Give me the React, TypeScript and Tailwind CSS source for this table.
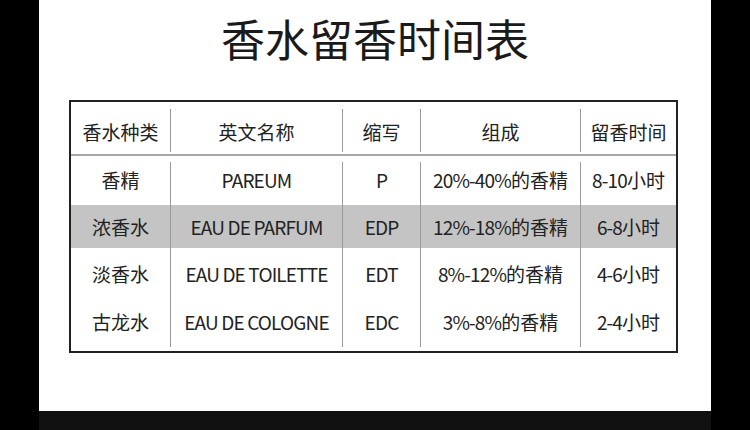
import React from "react";

const font = { fontFamily: '"Noto Sans CJK SC", "Noto Sans", sans-serif' };

const widths = ["w-[99px]", "w-[172px]", "w-[78px]", "w-[160px]", "flex-1"];

const header = ["香水种类", "英文名称", "缩写", "组成", "留香时间"];

const rows: { cells: string[]; gray?: boolean; cls: string }[] = [
  { cells: ["香精", "PAREUM", "P", "20%-40%的香精", "8-10小时"], cls: "h-[43px] pb-[6px]" },
  { cells: ["浓香水", "EAU DE PARFUM", "EDP", "12%-18%的香精", "6-8小时"], gray: true, cls: "h-[43px] pt-[2px]" },
  { cells: ["淡香水", "EAU DE TOILETTE", "EDT", "8%-12%的香精", "4-6小时"], cls: "h-[50px] pt-[3px]" },
  { cells: ["古龙水", "EAU DE COLOGNE", "EDC", "3%-8%的香精", "2-4小时"], cls: "h-[49px]" },
];

function Text({ s }: { s: string }) {
  const parts = s.match(/[\x00-\x7f]+|[^\x00-\x7f]+/g) || [];
  return (
    <>
      {parts.map((p, i) =>
        /^[\x00-\x7f]+$/.test(p) ? (
          <span key={i} className="tracking-[-0.85px]">
            {p}
          </span>
        ) : (
          <span key={i}>{p}</span>
        )
      )}
    </>
  );
}

export default function App() {
  return (
    <div className="w-[750px] h-[430px] bg-black px-[39px] flex flex-col" style={font}>
      <div className="h-[411px] bg-white flex flex-col">
        <div className="h-[100px] flex justify-center">
          <h1 className="text-[44px] leading-none text-[#1a1a1a] font-normal mt-[16px]">
            香水留香时间表
          </h1>
        </div>
        <div className="ml-[30px] w-[609px] border-2 border-[#222] text-[19px] text-[#222]">
          <div className="flex pt-[7px] pb-[2px] border-b-2 border-[#a8a8a8]">
            {header.map((h, i) => (
              <div
                key={i}
                className={`${widths[i]} h-[43px] flex items-center justify-center pt-[3px] ${i > 0 ? "border-l border-[#9a9a9a]" : ""}`}
              >
                {h}
              </div>
            ))}
          </div>
          <div className="pt-[6px] pb-[4px]">
            {rows.map((r, ri) => (
              <div key={ri} className={`flex ${r.gray ? "bg-[#c4c4c4]" : ""}`}>
                {r.cells.map((c, i) => (
                  <div
                    key={i}
                    className={`${widths[i]} ${r.cls} flex items-center justify-center ${i > 0 ? "border-l border-[#9a9a9a]" : ""}`}
                  >
                    <div>
                      <Text s={c} />
                    </div>
                  </div>
                ))}
              </div>
            ))}
          </div>
        </div>
      </div>
      <div className="h-[19px] bg-[#111]" />
    </div>
  );
}
